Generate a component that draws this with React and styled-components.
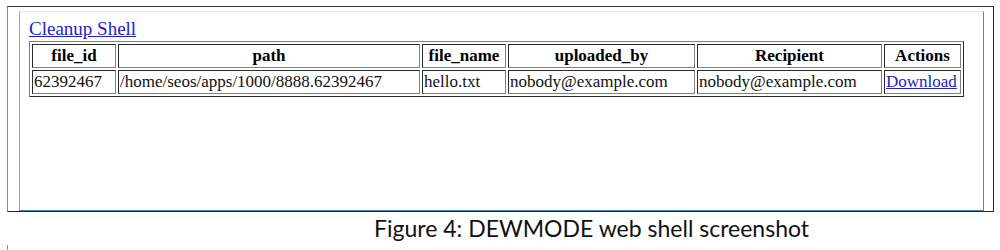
import React from "react";
import styled, { createGlobalStyle } from "styled-components";

const GlobalStyle = createGlobalStyle`
  html, body {
    margin: 0;
    padding: 0;
    background: #ffffff;
  }
  body {
    width: 1000px;
    height: 250px;
    overflow: hidden;
    font-family: "Liberation Serif", "Times New Roman", serif;
  }
`;

const Page = styled.div`
  padding: 6px 0 0 7px;
`;

const Frame = styled.div`
  box-sizing: border-box;
  width: 987px;
  height: 206px;
  border-top: 1px solid #3a3a3a;
  border-left: 1px solid #8a8a8a;
  border-right: 1px solid #2a2a2a;
  border-bottom: 1px solid #2a2a2a;
  padding: 4px 9px 0 11px;
`;

const Panel = styled.div`
  box-sizing: border-box;
  height: 200px;
  border-top: 1px solid #e3e6ea;
  border-left: 1px solid #7fa7cc;
  border-right: 1px solid #4b8cc4;
  border-bottom: 1px solid #4a80b0;
  padding: 6px 0 0 9px;
`;

const ShellLink = styled.a`
  display: block;
  font-size: 19px;
  line-height: 22px;
  color: #2222cc;
  text-decoration: underline;
  margin-bottom: 1px;
  cursor: pointer;
`;

const Table = styled.table`
  width: 935px;
  table-layout: fixed;
  border-collapse: separate;
  border-spacing: 2px;
  border: 1px outset #808080;
  font-size: 17px;
`;

const Head = styled.th`
  width: ${(p) => p.$w}px;
  box-sizing: border-box;
  border: 1px inset #808080;
  padding: 1px 2px;
  font-weight: bold;
  text-align: center;
  line-height: 20px;
  color: #000;
`;

const Cell = styled.td`
  border: 1px inset #808080;
  padding: 1px 1px;
  text-align: left;
  line-height: 20px;
  white-space: nowrap;
  overflow: hidden;
  color: #111;
`;

const DownloadLink = styled.a`
  color: #2222cc;
  text-decoration: underline;
  cursor: pointer;
`;

const Caption = styled.div`
  padding: 3px 0 0 367px;
  font-family: Lato, "Open Sans", sans-serif;
  font-size: 23px;
  line-height: 26px;
  color: #111;
`;

const Mark = styled.div`
  margin: 4px 0 0 0;
  width: 1px;
  height: 6px;
  background: #999;
`;

const columns = [
  { key: "file_id", label: "file_id", w: 84 },
  { key: "path", label: "path", w: 302 },
  { key: "file_name", label: "file_name", w: 84 },
  { key: "uploaded_by", label: "uploaded_by", w: 187 },
  { key: "recipient", label: "Recipient", w: 185 },
  { key: "actions", label: "Actions", w: 77 },
];

const rows = [
  {
    file_id: "62392467",
    path: "/home/seos/apps/1000/8888.62392467",
    file_name: "hello.txt",
    uploaded_by: "nobody@example.com",
    recipient: "nobody@example.com",
  },
];

export default function App() {
  return (
    <>
      <GlobalStyle />
      <Page>
        <Frame>
          <Panel>
            <ShellLink>Cleanup Shell</ShellLink>
            <Table>
              <thead>
                <tr>
                  {columns.map((c) => (
                    <Head key={c.key} $w={c.w}>
                      {c.label}
                    </Head>
                  ))}
                </tr>
              </thead>
              <tbody>
                {rows.map((r) => (
                  <tr key={r.file_id}>
                    <Cell>{r.file_id}</Cell>
                    <Cell>{r.path}</Cell>
                    <Cell>{r.file_name}</Cell>
                    <Cell>{r.uploaded_by}</Cell>
                    <Cell>{r.recipient}</Cell>
                    <Cell>
                      <DownloadLink>Download</DownloadLink>
                    </Cell>
                  </tr>
                ))}
              </tbody>
            </Table>
          </Panel>
        </Frame>
        <Caption>Figure 4: DEWMODE web shell screenshot</Caption>
        <Mark />
      </Page>
    </>
  );
}
